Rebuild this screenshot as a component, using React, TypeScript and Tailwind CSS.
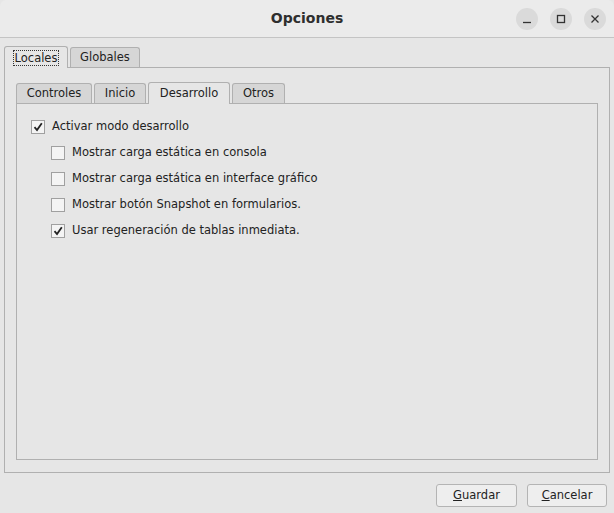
import React from "react";

const Check = ({ on }: { on: boolean }) => (
  <span className="w-[14px] h-[14px] border border-[#a0a0a0] bg-[#f4f4f4] flex items-center justify-center shrink-0">
    {on && (
      <svg width="10" height="10" viewBox="0 0 10 10">
        <path d="M1.5 5.2 L4 8 L8.8 1.2" stroke="#222" strokeWidth="1.8" fill="none" />
      </svg>
    )}
  </span>
);

const Row = ({ on, label, indent }: { on: boolean; label: string; indent?: boolean }) => (
  <div className={`flex items-center h-[26px] gap-[7px] ${indent ? "pl-[34px]" : "pl-[14px]"}`}>
    <Check on={on} />
    <span>{label}</span>
  </div>
);

export default function App() {
  return (
    <div className="w-[614px] h-[513px] bg-[#e6e6e6] flex flex-col text-[11.5px] text-[#222]" style={{ fontFamily: '"DejaVu Sans", sans-serif' }}>
      <div className="h-[38px] shrink-0 bg-[#ebebeb] border-b border-[#c4c4c4] rounded-t-[6px] flex items-center relative">
        <div className="flex-1 text-center font-bold text-[14px] text-[#2e2e2e]">Opciones</div>
        <div className="absolute right-[8px] top-[8px] flex gap-[12px]">
          {[0, 1, 2].map((i) => (
            <span key={i} className="w-[22px] h-[22px] rounded-full bg-[#dadada] flex items-center justify-center">
              <svg width="10" height="10" viewBox="0 0 10 10" stroke="#333" strokeWidth="1.3" fill="none">
                {i === 0 && <path d="M1 8.5 H9" />}
                {i === 1 && <rect x="1.5" y="1.5" width="7" height="7" />}
                {i === 2 && <path d="M1.5 1.5 L8.5 8.5 M8.5 1.5 L1.5 8.5" />}
              </svg>
            </span>
          ))}
        </div>
      </div>
      <div className="flex-1 flex flex-col px-[4px] pt-[7px]">
        <div className="flex items-end h-[22px] gap-[2px]">
          <div className="w-[64px] h-[22px] bg-[#e6e6e6] border border-b-0 border-[#b0b0b0] rounded-t-[3px] flex items-center justify-center relative top-[1px]">
            <span className="border border-dotted border-[#333] px-[1px] leading-[14px]">Locales</span>
          </div>
          <div className="w-[70px] h-[20px] bg-[#d6d6d6] border border-b-0 border-[#b0b0b0] rounded-t-[3px] flex items-center justify-center">Globales</div>
        </div>
        <div className="h-[406px] border border-[#b0b0b0] px-[11px] pt-[13px] pb-[12px] flex flex-col">
          <div className="flex items-end h-[22px] gap-[2px]">
            {[["Controles", 76], ["Inicio", 52]].map(([t, w]) => (
              <div key={t as string} style={{ width: w as number }} className="h-[20px] bg-[#d6d6d6] border border-b-0 border-[#b0b0b0] rounded-t-[3px] flex items-center justify-center">{t}</div>
            ))}
            <div className="w-[82px] h-[22px] bg-[#e6e6e6] border border-b-0 border-[#b0b0b0] rounded-t-[3px] flex items-start pt-[2px] justify-center relative top-[1px]">Desarrollo</div>
            <div className="w-[53px] h-[20px] bg-[#d6d6d6] border border-b-0 border-[#b0b0b0] rounded-t-[3px] flex items-center justify-center">Otros</div>
          </div>
          <div className="flex-1 border border-[#b0b0b0] pt-[10px]">
            <Row on label="Activar modo desarrollo" />
            <Row on={false} indent label="Mostrar carga estática en consola" />
            <Row on={false} indent label="Mostrar carga estática en interface gráfico" />
            <Row on={false} indent label="Mostrar botón Snapshot en formularios." />
            <Row on indent label="Usar regeneración de tablas inmediata." />
          </div>
        </div>
        <div className="flex justify-end gap-[10px] pr-[3px] pt-[11px]">
          <button className="w-[81px] h-[23px] border border-[#b4b4b4] rounded-[3px] bg-[#eeeeee]"><u>G</u>uardar</button>
          <button className="w-[80px] h-[23px] border border-[#b4b4b4] rounded-[3px] bg-[#eeeeee]"><u>C</u>ancelar</button>
        </div>
      </div>
    </div>
  );
}
